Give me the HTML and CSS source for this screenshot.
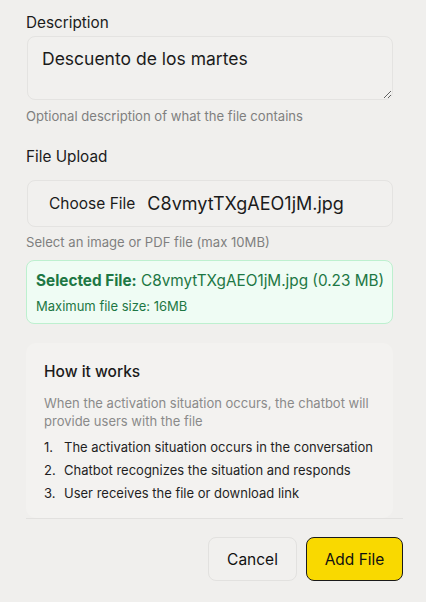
FILE: index.html
```html
<!DOCTYPE html>
<html lang="en">
<head>
<meta charset="utf-8">
<title>Add File</title>
<link rel="stylesheet" href="styles.css">
</head>
<body>
<div class="dialog">
  <div class="fields">
    <label class="label" for="desc">Description</label>
    <textarea id="desc" class="textarea">Descuento de los martes</textarea>
    <p class="help">Optional description of what the file contains</p>

    <div class="label label-upload">File Upload</div>
    <div class="file-input">
      <span class="file-btn">Choose File</span>
      <span class="file-name">C8vmytTXgAEO1jM.jpg</span>
    </div>
    <p class="help help-upload">Select an image or PDF file (max 10MB)</p>

    <div class="selected">
      <div class="selected-main"><strong>Selected File:</strong> C8vmytTXgAEO1jM.jpg (0.23 MB)</div>
      <div class="selected-sub">Maximum file size: 16MB</div>
    </div>

    <div class="how">
      <h3 class="how-title">How it works</h3>
      <p class="how-desc">When the activation situation occurs, the chatbot will provide users with the file</p>
      <ol class="how-list">
        <li><span class="num">1.</span>The activation situation occurs in the conversation</li>
        <li><span class="num">2.</span>Chatbot recognizes the situation and responds</li>
        <li><span class="num">3.</span>User receives the file or download link</li>
      </ol>
    </div>
  </div>
  <div class="footer">
    <button class="btn btn-cancel">Cancel</button>
    <button class="btn btn-primary">Add File</button>
  </div>
</div>
</body>
</html>
```

FILE: styles.css
```css
* { box-sizing: border-box; }
html, body {
  margin: 0;
  background: #f0efed;
}
body {
  font-family: "Inter", "Liberation Sans", sans-serif;
  color: #1b1b1b;
}
.dialog {
  width: 377px;
  margin-left: 26px;
  padding-top: 13px;
}
.fields {
  width: 367px;
  display: flex;
  flex-direction: column;
}
.label {
  display: block;
  font-size: 15.3px;
  line-height: 20px;
  color: #1b1b1b;
  margin-bottom: 3px;
}
.label-upload {
  margin-top: 22px;
  margin-bottom: 13px;
}
.textarea {
  display: block;
  width: 366px;
  height: 64px;
  margin-left: 1px;
  border: 1px solid #e4e3e1;
  border-radius: 8px;
  background: #f1f0ee;
  font-family: inherit;
  font-size: 17.5px;
  line-height: 24px;
  color: #1b1b1b;
  padding: 10px 14px;
  resize: vertical;
  outline: none;
}
.help {
  margin: 7px 0 0;
  font-size: 13.1px;
  line-height: 18px;
  color: #7f7f7f;
}
.file-input {
  height: 47px;
  margin-left: 1px;
  width: 366px;
  border: 1px solid #e4e3e1;
  border-radius: 8px;
  background: #f1f0ee;
  display: flex;
  align-items: center;
  padding-left: 21px;
}
.file-btn {
  font-size: 15.5px;
  color: #1b1b1b;
  margin-right: 12px;
}
.file-name {
  font-size: 18px;
  color: #1b1b1b;
}
.help-upload {
  margin-top: 6px;
}
.selected {
  margin-top: 9px;
  height: 64px;
  border: 1px solid #bdf0cf;
  border-radius: 8px;
  background: #effcf4;
  padding: 9px 9px;
  color: #1d7744;
}
.selected-main {
  font-size: 15.3px;
  line-height: 22px;
  white-space: nowrap;
}
.selected-main strong {
  font-weight: 700;
}
.selected-sub {
  margin-top: 5px;
  font-size: 13px;
  line-height: 18px;
}
.how {
  margin-top: 19px;
  background: #f3f2f0;
  border-radius: 10px;
  padding: 19px 18px 13px;
}
.how-title {
  margin: 0;
  font-size: 15.5px;
  line-height: 20px;
  font-weight: 500;
  color: #1b1b1b;
}
.how-desc {
  margin: 12px 0 0;
  font-size: 13px;
  line-height: 18px;
  color: #8a8a8a;
}
.how-list {
  list-style: none;
  margin: 6px 0 0;
  padding: 0;
  font-size: 13px;
  line-height: 23px;
  color: #1f1f1f;
  white-space: nowrap;
}
.how-list .num {
  display: inline-block;
  width: 20px;
}
.footer {
  border-top: 1px solid #e2e1df;
  padding-top: 18px;
  display: flex;
  justify-content: flex-end;
  gap: 9px;
}
.btn {
  height: 44px;
  border-radius: 8px;
  font-family: inherit;
  font-size: 15.5px;
  color: #111;
  cursor: pointer;
}
.btn-cancel {
  width: 89px;
  background: #f1f0ee;
  border: 1px solid #e2e1df;
}
.btn-primary {
  width: 97px;
  background: #f9d900;
  border: 1px solid #1a1a1a;
}
```
